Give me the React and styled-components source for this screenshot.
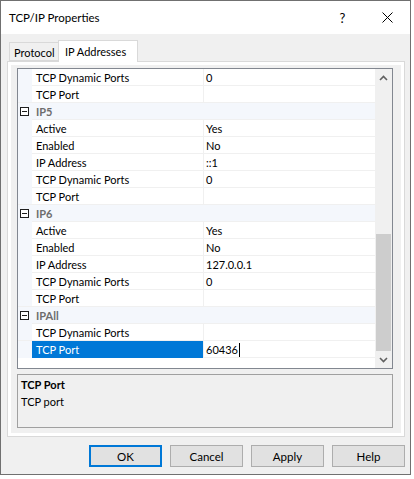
import styled, { createGlobalStyle } from "styled-components";

const GlobalStyle = createGlobalStyle`
  html, body {
    margin: 0;
    padding: 0;
    background: #ffffff;
  }
  * {
    box-sizing: border-box;
  }
`;

const FONT = `Lato, "Noto Sans", "Liberation Sans", sans-serif`;

const Window = styled.div`
  width: 411px;
  height: 475px;
  border: 1px solid #707070;
  display: flex;
  flex-direction: column;
  font-family: ${FONT};
  font-size: 11px;
  color: #000;
`;

const TitleBar = styled.div`
  height: 33px;
  background: #fff;
  display: flex;
  align-items: center;
  padding-left: 8px;
  flex-shrink: 0;
`;

const TitleText = styled.div`
  flex: 1;
  font-size: 11.5px;
`;

const TitleButton = styled.div`
  width: 45px;
  height: 33px;
  display: flex;
  align-items: center;
  justify-content: center;
  font-size: 13px;
`;

const Body = styled.div`
  flex: 1;
  background: #f0f0f0;
  padding: 6px 5px 0 6px;
  display: flex;
  flex-direction: column;
`;

const TabStrip = styled.div`
  display: flex;
  align-items: flex-end;
  height: 21px;
  padding-left: 2px;
`;

const Tab = styled.div`
  position: relative;
  width: ${(p) => (p.$active ? "80px" : "50px")};
  height: ${(p) => (p.$active ? "22px" : "19px")};
  margin-bottom: ${(p) => (p.$active ? "-1px" : "0")};
  margin-left: ${(p) => (p.$active ? "-1px" : "0")};
  background: ${(p) => (p.$active ? "#fff" : "#f0f0f0")};
  border: 1px solid #d9d9d9;
  border-bottom: ${(p) => (p.$active ? "none" : "1px solid #d9d9d9")};
  padding: ${(p) => (p.$active ? "0 0 0 6px" : "2px 0 0 4px")};
  z-index: ${(p) => (p.$active ? 1 : 0)};
  display: flex;
  align-items: center;
  white-space: nowrap;
`;

const Panel = styled.div`
  height: 376px;
  border: 1px solid #d9d9d9;
  background: #fff;
  padding: 3px;
  display: flex;
`;

const PropGrid = styled.div`
  flex: 1;
  background: #f0f0f0;
  padding: 3px 8px 5px 6px;
  display: flex;
  flex-direction: column;
  gap: 5px;
`;

const GridView = styled.div`
  height: 301px;
  border: 1px solid #828790;
  background: #fff;
  display: flex;
  flex-shrink: 0;
`;

const Rows = styled.div`
  flex: 1;
  display: flex;
  flex-direction: column;
`;

const Row = styled.div`
  height: 17px;
  display: grid;
  grid-template-columns: 14px 171px 1px 1fr;
  border-bottom: 1px solid #f0f0f0;
  background: ${(p) => (p.$category ? "#f4f7fc" : "#fff")};
`;

const Margin = styled.div`
  background: #f4f7fc;
  display: flex;
  align-items: center;
  padding-left: 2px;
`;

const MinusBox = styled.div`
  width: 9px;
  height: 9px;
  border: 1px solid #1e1e1e;
  display: flex;
  align-items: center;
  justify-content: center;
  background: #fff;

  &::after {
    content: "";
    width: 5px;
    height: 1px;
    background: #1e1e1e;
  }
`;

const NameCell = styled.div`
  padding-left: 4px;
  line-height: 17px;
  white-space: nowrap;
  overflow: hidden;
  background: ${(p) => (p.$selected ? "#0078d7" : "transparent")};
  color: ${(p) => (p.$selected ? "#fff" : "#000")};
`;

const CategoryLabel = styled.div`
  grid-column: 2 / 5;
  padding-left: 4px;
  line-height: 17px;
  font-weight: bold;
  color: #6d6d6d;
`;

const Divider = styled.div`
  background: #f0f0f0;
`;

const ValueCell = styled.div`
  padding-left: 2px;
  line-height: 17px;
  white-space: nowrap;
  display: flex;
  align-items: center;
`;

const Caret = styled.span`
  width: 1px;
  height: 14px;
  background: #000;
  margin-left: 1px;
`;

const ScrollBar = styled.div`
  width: 17px;
  background: #f0f0f0;
  display: flex;
  flex-direction: column;
`;

const ScrollArrow = styled.div`
  height: 17px;
  display: flex;
  align-items: center;
  justify-content: center;
  flex-shrink: 0;
`;

const Track = styled.div`
  flex: 1;
  display: flex;
  flex-direction: column;
  justify-content: flex-end;
`;

const Thumb = styled.div`
  height: 117px;
  margin: 0 1px;
  background: #cdcdcd;
`;

const Description = styled.div`
  flex: 1;
  border: 1px solid #a0a0a0;
  background: #f0f0f0;
  padding: 1px 3px;
  line-height: 17px;
`;

const DescTitle = styled.div`
  font-weight: bold;
`;

const ButtonRow = styled.div`
  display: flex;
  justify-content: flex-end;
  gap: 8px;
  margin-top: 8px;
`;

const Button = styled.button`
  width: 73px;
  height: 22px;
  font-family: ${FONT};
  font-size: 11.5px;
  color: #000;
  background: #e1e1e1;
  border: ${(p) => (p.$default ? "2px solid #0078d7" : "1px solid #adadad")};
  padding: 0;
`;

const Chevron = ({ up }) => (
  <svg width="9" height="6" viewBox="0 0 9 6">
    <path
      d={up ? "M1 5 L4.5 1.5 L8 5" : "M1 1 L4.5 4.5 L8 1"}
      fill="none"
      stroke="#606060"
      strokeWidth="1.6"
    />
  </svg>
);

const rows = [
  { name: "TCP Dynamic Ports", value: "0" },
  { name: "TCP Port", value: "" },
  { category: "IP5" },
  { name: "Active", value: "Yes" },
  { name: "Enabled", value: "No" },
  { name: "IP Address", value: "::1" },
  { name: "TCP Dynamic Ports", value: "0" },
  { name: "TCP Port", value: "" },
  { category: "IP6" },
  { name: "Active", value: "Yes" },
  { name: "Enabled", value: "No" },
  { name: "IP Address", value: "127.0.0.1" },
  { name: "TCP Dynamic Ports", value: "0" },
  { name: "TCP Port", value: "" },
  { category: "IPAll" },
  { name: "TCP Dynamic Ports", value: "" },
  { name: "TCP Port", value: "60436", selected: true },
];

export default function App() {
  return (
    <>
      <GlobalStyle />
      <Window>
        <TitleBar>
          <TitleText>TCP/IP Properties</TitleText>
          <TitleButton>?</TitleButton>
          <TitleButton>
            <svg width="11" height="11" viewBox="0 0 11 11">
              <path d="M0.5 0.5 L10.5 10.5 M10.5 0.5 L0.5 10.5" stroke="#000" strokeWidth="1" />
            </svg>
          </TitleButton>
        </TitleBar>
        <Body>
          <TabStrip>
            <Tab>Protocol</Tab>
            <Tab $active>IP Addresses</Tab>
          </TabStrip>
          <Panel>
            <PropGrid>
              <GridView>
                <Rows>
                  {rows.map((r, i) =>
                    r.category ? (
                      <Row key={i} $category>
                        <Margin>
                          <MinusBox />
                        </Margin>
                        <CategoryLabel>{r.category}</CategoryLabel>
                      </Row>
                    ) : (
                      <Row key={i}>
                        <Margin />
                        <NameCell $selected={r.selected}>{r.name}</NameCell>
                        <Divider />
                        <ValueCell>
                          {r.value}
                          {r.selected && <Caret />}
                        </ValueCell>
                      </Row>
                    )
                  )}
                </Rows>
                <ScrollBar>
                  <ScrollArrow>
                    <Chevron up />
                  </ScrollArrow>
                  <Track>
                    <Thumb />
                  </Track>
                  <ScrollArrow>
                    <Chevron />
                  </ScrollArrow>
                </ScrollBar>
              </GridView>
              <Description>
                <DescTitle>TCP Port</DescTitle>
                <div>TCP port</div>
              </Description>
            </PropGrid>
          </Panel>
          <ButtonRow>
            <Button $default>OK</Button>
            <Button>Cancel</Button>
            <Button>Apply</Button>
            <Button>Help</Button>
          </ButtonRow>
        </Body>
      </Window>
    </>
  );
}
